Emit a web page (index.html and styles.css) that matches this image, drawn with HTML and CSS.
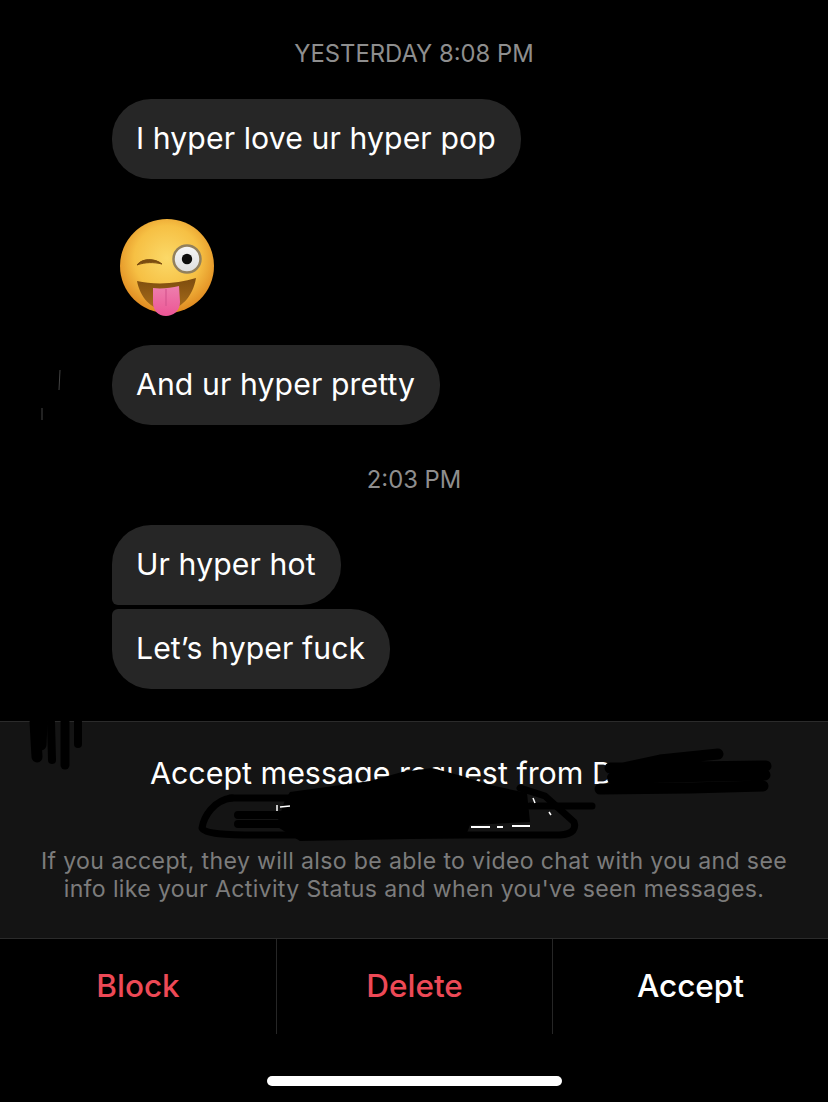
FILE: index.html
```html
<!DOCTYPE html>
<html lang="en">
	<head>
		<meta charset="UTF-8">
		<meta name="viewport" content="width=device-width, initial-scale=1.0">
		<title>message request</title>
		<link rel="stylesheet" href="styles.css">
	</head>
	<body>
		<section class="thread">
			<div class="stamp stamp_first">YESTERDAY 8:08 PM</div>
			<div class="bubble">I hyper love ur hyper pop</div>
			<svg class="emoji" width="98" height="98" viewBox="0 0 98 98">
				<defs>
					<radialGradient id="face" cx="50%" cy="42%" r="58%">
						<stop offset="0" stop-color="#fbd968"/>
						<stop offset="0.6" stop-color="#f6c044"/>
						<stop offset="1" stop-color="#e08a20"/>
					</radialGradient>
					<linearGradient id="tongue" x1="0" y1="0" x2="0" y2="1">
						<stop offset="0" stop-color="#ee7fae"/>
						<stop offset="1" stop-color="#ec5595"/>
					</linearGradient>
					<linearGradient id="mouth" x1="0" y1="0" x2="0" y2="1">
						<stop offset="0" stop-color="#7d4c0e"/>
						<stop offset="1" stop-color="#a86d1c"/>
					</linearGradient>
					<linearGradient id="eye" x1="0" y1="0" x2="0" y2="1">
						<stop offset="0" stop-color="#f6f6f6"/>
						<stop offset="1" stop-color="#dedede"/>
					</linearGradient>
				</defs>
				<circle cx="49" cy="48" r="47" fill="url(#face)"/>
				<path d="M19 63 C36 67 60 66 78 60 C75 79 62 92 48 92 C33 92 22 79 19 63 Z" fill="url(#mouth)"/>
				<path d="M35 70 C43 71 53 70 61 68 L62 84 C62 93 55 98 48 98 C40 98 35 92 35 85 Z" fill="url(#tongue)"/>
				<path d="M48 71 L48 88" stroke="#d5568f" stroke-width="1.2" fill="none"/>
				<path d="M19 47 C24 40 37 40 44 46 C36 44 27 44 19 47 Z" fill="#7a4c10" stroke="#7a4c10" stroke-width="1" stroke-linejoin="round"/>
				<circle cx="69" cy="41" r="13.5" fill="url(#eye)" stroke="#92805c" stroke-width="2.5"/>
				<circle cx="69" cy="41" r="5.2" fill="#0c0c0c"/>
			</svg>
			<div class="bubble">And ur hyper pretty</div>
			<div class="stamp stamp_mid">2:03 PM</div>
			<div class="bubble bubble_top">Ur hyper hot</div>
			<div class="bubble bubble_bottom">Let’s hyper fuck</div>
		</section>

		<section class="request">
			<h1 class="request_title">Accept message request from D</h1>
			<p class="request_note">If you accept, they will also be able to video chat with you and see<br>info like your Activity Status and when you've seen messages.</p>
		</section>

		<div class="actions">
			<div class="action action_red">Block</div>
			<div class="action action_red">Delete</div>
			<div class="action">Accept</div>
		</div>
		<div class="home_row"><span class="home_bar"></span></div>

		<!-- marker scribbles on top of the screenshot -->
		<svg class="scribble" width="828" height="1102" viewBox="0 0 828 1102">
			<path d="M60 370 L59 390 M42 408 L42 420" stroke="#444" stroke-width="1" fill="none"/>
			<g fill="none" stroke="#000" stroke-linecap="round" stroke-linejoin="round">
				<path stroke-width="11" d="M35 722 L37 757 M42 722 L41 745"/>
				<path stroke-width="8" d="M51 722 L52 760"/>
				<path stroke-width="9" d="M65 722 L65 765"/>
				<path stroke-width="8" d="M78 722 L78 744"/>
				<path stroke-width="11" d="M614 770 L660 760 L718 754 M610 768 L766 766 M620 778 L765 775 M600 789 L690 788 L763 786"/>
				<path stroke-width="14" d="M614 778 L700 772"/>
				<path stroke-width="7" d="M232 798 C214 800 204 816 202 828 C205 834 225 835 260 835 L560 835 C574 834 576 828 574 822 L545 796 L520 788"/>
				<path stroke-width="7" d="M230 798 L350 798 M530 806 L592 806"/>
				<path stroke-width="8" d="M238 815 L330 815 M238 824 L300 824"/>
			</g>
			<path d="M290 792 L370 781 L402 772 L432 768 L462 776 L490 785 L527 793 L530 822 L470 825 L465 838 L300 841 L276 826 L285 800 Z" fill="#000"/>
			<g stroke="#fff" stroke-width="1.5" fill="none">
				<path d="M277 805 L277 811 M280 807 L290 806 M533 798 L535 803 M549 812 L551 815"/>
				<path d="M471 827 L490 827 M497 827 L503 827 M512 826 L530 826" stroke-width="2"/>
			</g>
		</svg>
	</body>
</html>
```

FILE: styles.css
```css
html,body{padding:0; margin:0; background:#000;}
body{
    width:828px; height:1102px; overflow:hidden; position:relative;
    font-family:Inter,"Liberation Sans",sans-serif; color:#fff;
}
.thread{height:721px; padding-left:112px; box-sizing:border-box; display:flex; flex-direction:column; align-items:flex-start;}
.stamp{
    width:604px; text-align:center; color:#8e8e8e;
    font-size:23.8px; line-height:28px;
}
.stamp_first{margin:40px 0 31px 0;}
.stamp_mid{margin:41px 0 31px 0;}
.bubble{
    height:80px; line-height:78px; padding:0 25px 0 24px; box-sizing:border-box;
    background:#262626; border-radius:39px;
    font-size:30.2px; letter-spacing:0.1px; white-space:nowrap;
}
.bubble_top{border-bottom-left-radius:6px; margin-bottom:4px;}
.bubble_bottom{border-top-left-radius:6px;}
.emoji{display:block; margin:39px 0 29px 6px;}

.request{
    height:218px; box-sizing:border-box; background:#141414;
    border-top:1px solid #2b2b2b; border-bottom:1px solid #2b2b2b;
}
.request_title{margin:31px 0 0 150px; height:94px; font-size:30.4px; line-height:40px; font-weight:400; white-space:nowrap;}
.request_note{margin:0; text-align:center; color:#7c7c7c; font-size:23.1px; line-height:28px; letter-spacing:0.35px;}

.actions{display:flex; height:95px;}
.action{
    flex:1; text-align:center; font-size:31.5px; line-height:94px; font-weight:500;
    border-left:1px solid #262626;
}
.action:first-child{border-left:0; flex:0 0 276px;}
.action_red{color:#ed4956;}
.home_row{display:flex; justify-content:center; padding-top:42px;}
.home_bar{display:block; width:295px; height:10px; border-radius:5px; background:#fff;}
.scribble{position:absolute; left:0; top:0;}
```
